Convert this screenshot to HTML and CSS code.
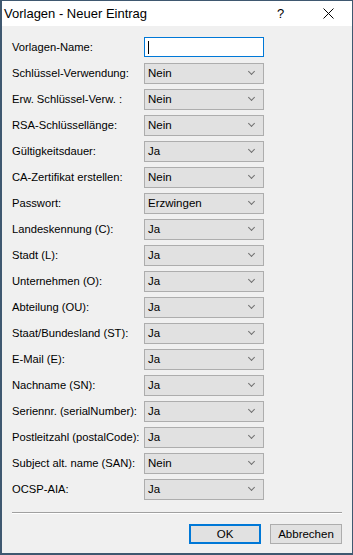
FILE: index.html
```html
<!DOCTYPE html>
<html lang="de">
<head>
    <meta charset="UTF-8">
    <title>Vorlagen - Neuer Eintrag</title>
    <link rel="stylesheet" href="styles.css">
</head>
<body>
    <div class="window">
        <div class="titlebar">
            <span class="title">Vorlagen - Neuer Eintrag</span>
            <span class="help">?</span>
            <span class="close">
                <svg width="11" height="11" viewBox="0 0 11 11"><path d="M0.5 0.5L10.5 10.5M10.5 0.5L0.5 10.5" stroke="#000" stroke-width="1"/></svg>
            </span>
        </div>

        <div class="content">
            <div class="form">
                <div class="row">
                    <label>Vorlagen-Name:</label>
                    <div class="textbox"><span class="caret"></span></div>
                </div>
                <div class="row"><label>Schlüssel-Verwendung:</label><div class="combo">Nein</div></div>
                <div class="row"><label>Erw. Schlüssel-Verw. :</label><div class="combo">Nein</div></div>
                <div class="row"><label>RSA-Schlüssellänge:</label><div class="combo">Nein</div></div>
                <div class="row"><label>Gültigkeitsdauer:</label><div class="combo">Ja</div></div>
                <div class="row"><label>CA-Zertifikat erstellen:</label><div class="combo">Nein</div></div>
                <div class="row"><label>Passwort:</label><div class="combo">Erzwingen</div></div>
                <div class="row"><label>Landeskennung (C):</label><div class="combo">Ja</div></div>
                <div class="row"><label>Stadt (L):</label><div class="combo">Ja</div></div>
                <div class="row"><label>Unternehmen (O):</label><div class="combo">Ja</div></div>
                <div class="row"><label>Abteilung (OU):</label><div class="combo">Ja</div></div>
                <div class="row"><label>Staat/Bundesland (ST):</label><div class="combo">Ja</div></div>
                <div class="row"><label>E-Mail (E):</label><div class="combo">Ja</div></div>
                <div class="row"><label>Nachname (SN):</label><div class="combo">Ja</div></div>
                <div class="row"><label>Seriennr. (serialNumber):</label><div class="combo">Ja</div></div>
                <div class="row"><label>Postleitzahl (postalCode):</label><div class="combo">Ja</div></div>
                <div class="row"><label>Subject alt. name (SAN):</label><div class="combo">Nein</div></div>
                <div class="row"><label>OCSP-AIA:</label><div class="combo">Ja</div></div>
            </div>

            <div class="separator"></div>

            <div class="buttons">
                <button class="default">OK</button>
                <button>Abbrechen</button>
            </div>
        </div>
    </div>
</body>
</html>
```

FILE: styles.css
```css
html, body {
    margin: 0;
    padding: 0;
    background: #f0f0f0;
}
.window {
    width: 353px;
    height: 555px;
    box-sizing: border-box;
    border: 1px solid #3f5870;
    border-left-width: 2px;
    border-bottom-width: 2px;
    background: #f0f0f0;
    font-family: "Liberation Sans", Arial, sans-serif;
    font-size: 12px;
    color: #000;
}
.titlebar {
    height: 25px;
    background: #fff;
    display: flex;
    align-items: center;
    padding-left: 2px;
}
.title {
    flex: 1;
    font-size: 13px;
}
.help {
    width: 14px;
    margin-right: 32px;
    font-size: 13px;
}
.close {
    width: 11px;
    margin-right: 18px;
    display: flex;
}
.content {
    padding: 11px 10px 0 10px;
}
.form {
    display: flex;
    flex-direction: column;
    gap: 6px;
}
.row {
    display: flex;
    align-items: center;
    height: 20px;
}
.row label {
    width: 132px;
    font-size: 11.2px;
}
.textbox {
    width: 120px;
    height: 20px;
    box-sizing: border-box;
    border: 1px solid #0078d7;
    background: #fff;
    display: flex;
    align-items: center;
    padding-left: 3px;
}
.caret {
    width: 1px;
    height: 13px;
    background: #000;
}
.combo {
    width: 120px;
    height: 21px;
    box-sizing: border-box;
    border: 1px solid #adadad;
    background: #e1e1e1;
    display: flex;
    align-items: center;
    padding-left: 3px;
    font-size: 11.5px;
    position: relative;
}
.combo::after {
    content: "";
    position: absolute;
    right: 9px;
    top: 5px;
    width: 4px;
    height: 4px;
    border-right: 1px solid #707070;
    border-bottom: 1px solid #707070;
    transform: rotate(45deg);
}
.separator {
    margin-top: 13px;
    height: 1px;
    background: #a0a0a0;
    border-bottom: 1px solid #fff;
}
.buttons {
    display: flex;
    justify-content: flex-end;
    gap: 9px;
    margin-top: 10px;
}
.buttons button {
    width: 72px;
    height: 20px;
    box-sizing: border-box;
    border: 1px solid #adadad;
    background: #e1e1e1;
    font-family: "Liberation Sans", Arial, sans-serif;
    font-size: 11.5px;
    padding: 0;
}
.buttons button.default {
    border: 2px solid #0078d7;
}
```
